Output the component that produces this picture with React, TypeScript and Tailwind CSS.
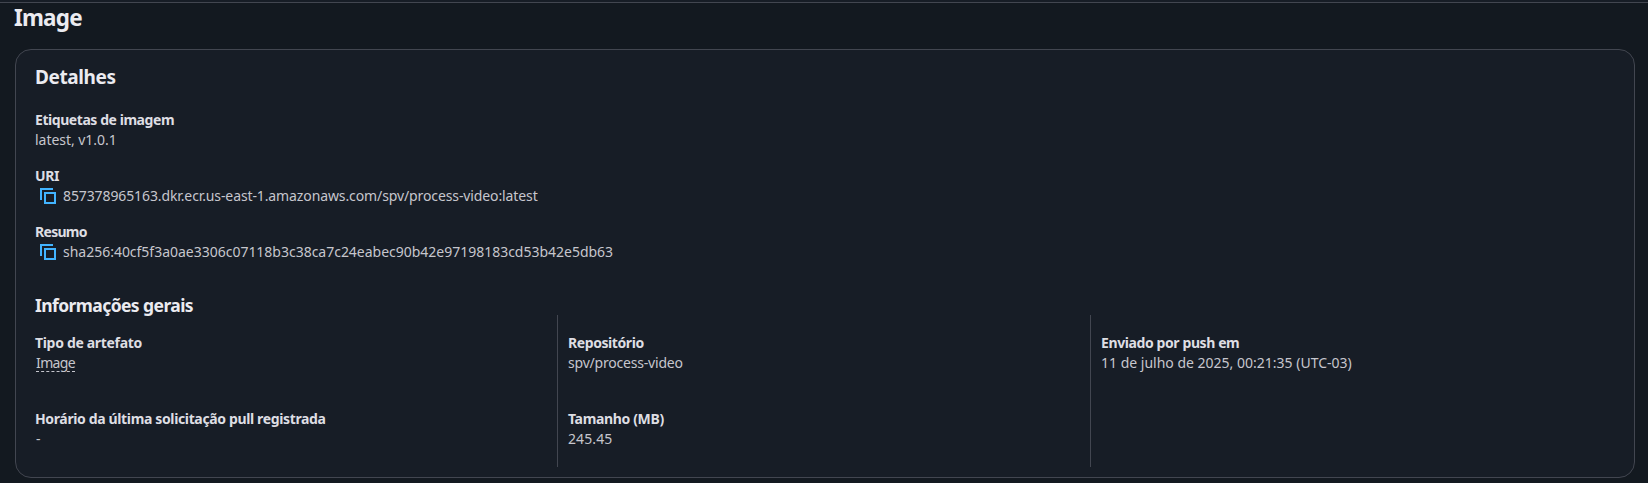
import type { ReactNode } from "react";

function CopyIcon() {
  return (
    <svg width="16" height="16" viewBox="0 0 16 16" fill="none" stroke="#42b4ff" strokeWidth="2" className="ml-1 mt-[2px] shrink-0">
      <path d="M13 1H1v11" />
      <path d="M5 5h10v10H5z" />
    </svg>
  );
}

function Field({ label, tracking, children }: { label: string; tracking: string; children: ReactNode }) {
  return (
    <div className="h-10">
      <div className={`-ml-px h-5 whitespace-nowrap font-bold text-[#dedee3] ${tracking}`}>{label}</div>
      <div className="flex h-5 whitespace-nowrap">{children}</div>
    </div>
  );
}

export default function App() {
  return (
    <div className="flex h-[483px] w-full flex-col overflow-hidden bg-[#131920] font-['Noto_Sans',sans-serif] text-[14px] leading-5 text-[#c6c6cd]">
      <div className="h-[3px] shrink-0 border-b border-[#424650] bg-[#171d26]" />
      <h1 className="h-[46px] shrink-0 pl-[14px] text-[22.5px] font-bold leading-[29px] tracking-[-0.8px] text-[#ebebf0]">Image</h1>
      <main className="ml-[15px] mr-[13px] h-[429px] shrink-0 rounded-2xl border border-[#424650] bg-[#171d26] pl-5 pr-[18px] pt-[15px]">
        <h2 className="-ml-px h-[45px] text-[19px] font-bold leading-[25px] tracking-[-0.4px] text-[#ebebf0]">Detalhes</h2>
        <div className="flex flex-col gap-4">
          <Field label="Etiquetas de imagem" tracking="tracking-[-0.44px]">
            <span className="-ml-px tracking-[-0.04px]">latest, v1.0.1</span>
          </Field>
          <Field label="URI" tracking="tracking-[-0.4px]">
            <CopyIcon />
            <span className="ml-[7px] tracking-[-0.11px]">857378965163.dkr.ecr.us-east-1.amazonaws.com/spv/process-video:latest</span>
          </Field>
          <Field label="Resumo" tracking="tracking-[-0.7px]">
            <CopyIcon />
            <span className="ml-[7px] tracking-[-0.015px]">sha256:40cf5f3a0ae3306c07118b3c38ca7c24eabec90b42e97198183cd53b42e5db63</span>
          </Field>
        </div>
        <h3 className="-ml-px mt-[31px] h-[22px] text-[17.5px] font-bold leading-[25px] tracking-[-0.58px] text-[#ebebf0]">Informações gerais</h3>
        <div className="flex h-[152px]">
          <section className="flex w-[521px] shrink-0 flex-col gap-9 pt-[18px]">
            <Field label="Tipo de artefato" tracking="tracking-[-0.32px]">
              <span className="h-[19px] border-b border-dashed border-[#c6c6cd] tracking-[-0.62px]">Image</span>
            </Field>
            <Field label="Horário da última solicitação pull registrada" tracking="tracking-[-0.36px]">-</Field>
          </section>
          <section className="flex w-[533px] shrink-0 flex-col gap-9 border-l border-[#424650] pl-[11px] pt-[18px]">
            <Field label="Repositório" tracking="tracking-[-0.42px]">
              <span className="-ml-px tracking-[-0.2px]">spv/process-video</span>
            </Field>
            <Field label="Tamanho (MB)" tracking="tracking-[-0.35px]">
              <span className="-ml-px tracking-[0.1px]">245.45</span>
            </Field>
          </section>
          <section className="flex-1 border-l border-[#424650] pl-[11px] pt-[18px]">
            <Field label="Enviado por push em" tracking="tracking-[-0.4px]">
              <span className="-ml-px">11 de julho de 2025, 00:21:35 (UTC-03)</span>
            </Field>
          </section>
        </div>
      </main>
    </div>
  );
}
